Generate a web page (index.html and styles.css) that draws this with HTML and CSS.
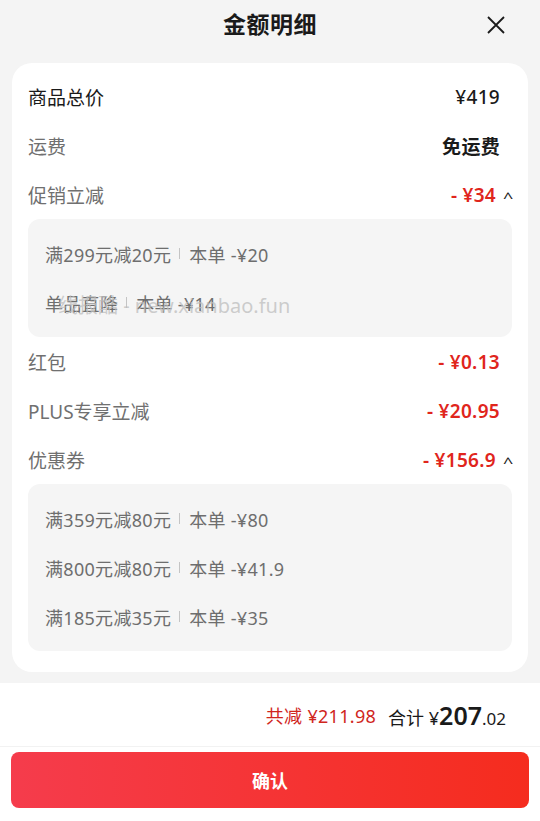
FILE: index.html
```html
<!DOCTYPE html>
<html lang="zh-CN">
<head>
    <meta charset="UTF-8">
    <meta name="viewport" content="width=device-width, initial-scale=1.0">
    <title>金额明细</title>
    <link rel="stylesheet" href="styles.css">
</head>
<body>

    <div class="sheet">
        <div class="header">
            <h1>金额明细</h1>
            <span class="close">
                <svg width="20" height="20" viewBox="0 0 20 20"><path d="M2 2L18 18M18 2L2 18" stroke="#1a1a1a" stroke-width="1.8" fill="none"/></svg>
            </span>
        </div>

        <div class="card">
            <div class="row">
                <span class="label dark">商品总价</span>
                <span class="value">¥419</span>
            </div>
            <div class="row">
                <span class="label">运费</span>
                <span class="value bold">免运费</span>
            </div>
            <div class="row">
                <span class="label">促销立减</span>
                <span class="value red open">- ¥34<i class="arrow">^</i></span>
            </div>
            <div class="detail">
                <div class="line">满299元减20元<b class="sep"></b>本单 -¥20</div>
                <div class="line mark">单品直降<b class="sep"></b>本单 -¥14<span class="watermark">线报酷 - new.xianbao.fun</span></div>
            </div>
            <div class="row">
                <span class="label">红包</span>
                <span class="value red">- ¥0.13</span>
            </div>
            <div class="row">
                <span class="label">PLUS专享立减</span>
                <span class="value red">- ¥20.95</span>
            </div>
            <div class="row">
                <span class="label">优惠券</span>
                <span class="value red open">- ¥156.9<i class="arrow">^</i></span>
            </div>
            <div class="detail">
                <div class="line">满359元减80元<b class="sep"></b>本单 -¥80</div>
                <div class="line">满800元减80元<b class="sep"></b>本单 -¥41.9</div>
                <div class="line">满185元减35元<b class="sep"></b>本单 -¥35</div>
            </div>
        </div>

        <div class="footer">
            <div class="total">
                <span class="saved">共减 ¥211.98</span>
                <span class="sum">合计 ¥<strong>207</strong><small>.02</small></span>
            </div>
            <button class="confirm">确认</button>
        </div>
    </div>

</body>
</html>
```

FILE: styles.css
```css
body {
    margin: 0;
    background-color: #f4f4f4;
    font-family: "Noto Sans", "Noto Sans CJK SC", sans-serif;
    color: #1a1a1a;
}

.sheet {
    display: flex;
    flex-direction: column;
    height: 821px;
}

.header {
    position: relative;
    height: 46px;
    display: flex;
    align-items: center;
    justify-content: center;
}

.header h1 {
    margin: 0;
    font-size: 23px;
    font-weight: 700;
    letter-spacing: 0.5px;
}

.close {
    position: absolute;
    right: 34px;
    top: 15px;
    display: flex;
}

.card {
    background-color: #ffffff;
    margin: 17px 12px 0;
    border-radius: 20px;
    padding: 9px 16px 21px;
}

.row {
    height: 49px;
    display: flex;
    align-items: center;
    justify-content: space-between;
    font-size: 19px;
}

.label {
    color: #707070;
}

.label.dark {
    color: #1a1a1a;
}

.value {
    margin-right: 12px;
    font-weight: 500;
    letter-spacing: 0.3px;
}

.value.bold {
    font-weight: 700;
}

.value.red {
    color: #e0251c;
    font-weight: 600;
}

.value.open {
    margin-right: 0;
    display: flex;
    align-items: center;
}

.arrow {
    font-style: normal;
    color: #1a1a1a;
    font-size: 15px;
    font-weight: 400;
    width: 16px;
    text-align: right;
    transform: scaleX(1.2);
    margin-top: 4px;
}

.detail {
    background-color: #f5f5f5;
    border-radius: 12px;
    padding: 10px 17px;
}

.line {
    height: 49px;
    display: flex;
    align-items: center;
    font-size: 18px;
    color: #6e6e6e;
    letter-spacing: 0.3px;
}

.sep {
    display: inline-block;
    width: 1px;
    height: 11px;
    background-color: #c4c4c4;
    margin: 0 9px 0 8px;
}

.mark {
    position: relative;
}

.watermark {
    position: absolute;
    left: 13px;
    top: 12px;
    font-size: 20px;
    color: rgba(190, 190, 190, 0.75);
    white-space: nowrap;
    letter-spacing: 0;
}

.footer {
    flex: 1;
    background-color: #ffffff;
    margin-top: 11px;
    display: flex;
    flex-direction: column;
}

.total {
    height: 63px;
    display: flex;
    align-items: center;
    justify-content: flex-end;
    padding-right: 34px;
    border-bottom: 1px solid #f2f2f2;
    font-size: 18px;
}

.saved {
    color: #d0261d;
    margin-right: 12px;
    letter-spacing: 0.3px;
}

.sum strong {
    font-size: 25px;
    font-weight: 600;
}

.sum small {
    font-size: 17px;
}

.confirm {
    margin: 5px 11px 0;
    height: 56px;
    border: none;
    border-radius: 8px;
    background: linear-gradient(90deg, #f53c4c, #f52c1e);
    color: #ffffff;
    font-family: inherit;
    font-size: 18px;
    font-weight: 700;
}
```
